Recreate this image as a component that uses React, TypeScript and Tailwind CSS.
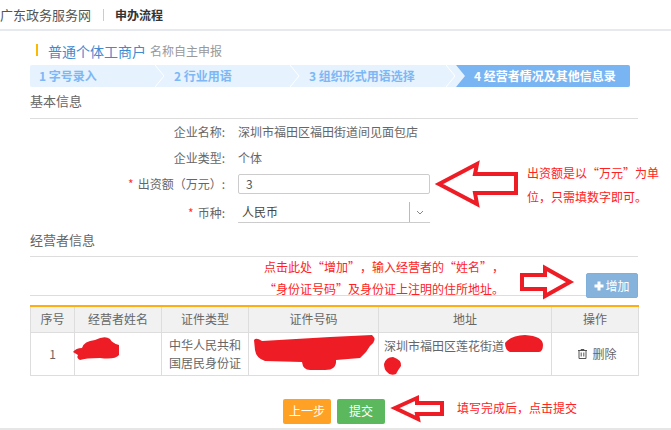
const font = '[font-family:"Noto_Sans_CJK_SC","Liberation_Sans",sans-serif]'

const steps = [
  { label: '1 字号录入', width: 'w-[135px]' },
  { label: '2 行业用语', width: 'w-[135px]' },
  { label: '3 组织形式用语选择', width: 'w-[156px]' },
]

function Chevron() {
  return (
    <svg className="absolute right-0 top-0" width="10" height="22" viewBox="0 0 10 22">
      <path d="M0 0 L9 11 L0 22" fill="none" stroke="#fff" strokeWidth="1" />
    </svg>
  )
}

function Row({ label, required, children, className }: { label: string; required?: boolean; children: React.ReactNode; className?: string }) {
  return (
    <div className={`flex items-center ${className ?? ''}`}>
      <div className="w-[195px] shrink-0 text-right text-[12px] text-[#666]">
        {required && <span className="mr-1 text-[#f33]">*</span>}
        {label}:
      </div>
      <div className="ml-[13px] text-[12px] text-[#666]">{children}</div>
    </div>
  )
}

function Annotations() {
  return (
    <svg className="pointer-events-none absolute left-0 top-0" width="671" height="430" viewBox="0 0 671 430">
      <g fill="#fff" stroke="#ee1c25" strokeWidth="4">
        <path d="M439 184 L477 164 L475 174 L516 174 L516 193 L475 193 L477 204 Z" />
        <path d="M522 275 L545 275 L545 268 L570 282 L545 296 L545 289 L522 289 Z" />
        <path d="M395 408 L417 398 L417 403 L442 403 L442 414 L417 414 L418 419 Z" />
      </g>
      <g fill="#ee1c25">
        <path d="M73 352 Q76 348 82 348 Q84 341 95 340 Q105 335 110 339 Q112 343 119 345 L119 355 Q115 360 100 358 Q85 358 80 360 Q76 358 78 355 Z" />
        <path d="M254 340 Q256 337 262 341 L330 337 L372 335 Q378 340 370 346 L366 352 L360 358 L336 360 Q337 370 325 370 L310 370 Q303 370 302 362 L265 361 Q256 358 255 350 Z" />
        <path d="M505 343 Q510 336 525 335 Q543 336 543 345 Q543 353 537 352 L510 352 Q505 350 505 343 Z" />
        <path d="M384 364 Q386 357 393 357 Q402 360 401 366 Q398 370 396 374 Q390 376 387 372 Q384 369 384 364 Z" />
      </g>
    </svg>
  )
}

export default function App() {
  return (
    <div className={`relative h-[430px] w-[671px] overflow-hidden bg-white [text-spacing-trim:space-all] ${font}`}>
      <header className="flex h-[31px] items-center border-b-2 border-[#e6e9ee]">
        <span className="text-[13px] leading-none text-[#555]">广东政务服务网</span>
        <span className="ml-[12px] h-[12px] w-px bg-[#ccc]" />
        <span className="ml-[11px] text-[12px] font-bold leading-none text-[#333]">申办流程</span>
      </header>

      <main className="ml-[30px] w-[608px]">
        <div className="flex h-[34px] items-center pl-[6px] pt-[3px]">
          <span className="h-[12px] w-[2px] bg-[#fbb900]" />
          <span className="ml-[10px] mt-[2px] text-[14px] leading-none text-[#3f8ad0]">普通个体工商户</span>
          <span className="ml-[4px] mt-[2px] text-[12px] leading-none text-[#999]">名称自主申报</span>
        </div>

        <div className="flex h-[22px] w-[600px] overflow-hidden rounded-[2px] bg-[#e6f2fd]">
          {steps.map((s) => (
            <div key={s.label} className={`relative flex items-center pl-[9px] text-[12px] font-bold text-[#7db8f5] ${s.width}`}>
              {s.label}
              <Chevron />
            </div>
          ))}
          <div className="flex w-[174px] items-center bg-[#7ab5f3] pl-[18px] text-[12px] font-bold text-white [clip-path:polygon(0_0,100%_0,100%_100%,0_100%,9px_50%)]">
            4 经营者情况及其他信息录
          </div>
        </div>

        <div className="flex h-[32px] items-center border-b border-[#ddd] pb-[4px] text-[13px] leading-none text-[#666]">基本信息</div>

        <Row label="企业名称" className="mt-[5px] h-[16px]">深圳市福田区福田街道间见面包店</Row>
        <Row label="企业类型" className="mt-[10px] h-[16px]">个体</Row>
        <Row label="出资额（万元）" required className="mt-[8px] h-[20px]">
          <div className="flex h-[20px] w-[192px] items-center rounded-[2px] border border-[#ccc] pl-[7px] text-[#555]">3</div>
        </Row>
        <Row label="币种" required className="mt-[8px] h-[21px]">
          <div className="flex h-[21px] w-[192px] items-center border-b border-[#ccc] pl-[4px] text-[#444]">
            <span className="flex-1">人民币</span>
            <span className="flex h-[20px] w-[21px] items-center justify-center border-l border-[#bbb]">
              <svg width="8" height="5" viewBox="0 0 8 5">
                <path d="M1 1 L4 4 L7 1" fill="none" stroke="#888" strokeWidth="1" />
              </svg>
            </span>
          </div>
        </Row>

        <div className="flex h-[34px] items-center border-b border-[#ddd] text-[13px] leading-none text-[#666]">经营者信息</div>

        <div className="flex h-[39px] items-start justify-end border-b border-[#ddd] pt-[16px]">
          <button className="relative z-10 flex h-[25px] w-[52px] shrink-0 items-center justify-center gap-[1px] rounded-[2px] border border-[#7fb0dc] bg-[#85b3dc] text-[12px] text-white">
            <svg width="10" height="10" viewBox="0 0 10 10">
              <path d="M5 0.5 V9.5 M0.5 5 H9.5" fill="none" stroke="#fff" strokeWidth="3" />
            </svg>
            增加
          </button>
        </div>

        <table className="mt-[9px] w-[608px] table-fixed border-collapse border-t-2 border-[#fdae12] text-center text-[12px] text-[#666]">
          <colgroup>
            <col className="w-[44px]" />
            <col className="w-[87px]" />
            <col className="w-[87px]" />
            <col className="w-[130px]" />
            <col className="w-[173px]" />
            <col className="w-[87px]" />
          </colgroup>
          <thead>
            <tr className="h-[26px] bg-[#f1f1f1]">
              {['序号', '经营者姓名', '证件类型', '证件号码', '地址', '操作'].map((h) => (
                <th key={h} className="border border-[#ddd] border-t-0 font-normal">{h}</th>
              ))}
            </tr>
          </thead>
          <tbody>
            <tr className="h-[43px]">
              <td className="border border-[#ddd]">1</td>
              <td className="border border-[#ddd]" />
              <td className="border border-[#ddd] leading-[18px]">中华人民共和<br />国居民身份证</td>
              <td className="border border-[#ddd]" />
              <td className="border border-[#ddd] px-[5px] pb-[16px] text-left">深圳市福田区莲花街道</td>
              <td className="border border-[#ddd] pl-[5px]">
                <span className="inline-flex items-center gap-[5px]">
                  <svg width="9" height="10" viewBox="0 0 9 10">
                    <path d="M0 1.5 H9 M3 1.5 V0.5 H6 V1.5 M1 1.5 V9.5 H8 V1.5 M3.2 3.5 V7.5 M5.8 3.5 V7.5" fill="none" stroke="#555" strokeWidth="1" />
                  </svg>
                  删除
                </span>
              </td>
            </tr>
          </tbody>
        </table>

        <div className="mt-[23px] flex gap-[6px] pl-[253px]">
          <button className="h-[25px] w-[48px] rounded-[2px] bg-[#ffa124] text-[12px] text-white">上一步</button>
          <button className="h-[25px] w-[48px] rounded-[2px] bg-[#5cb85c] text-[12px] text-white">提交</button>
        </div>
      </main>

      <div className="absolute bottom-0 left-0 h-[2px] w-full bg-[#e6e6e6]" />

      <Annotations />

      <p className="absolute left-[527px] top-[161px] whitespace-nowrap text-[12px] leading-[24px] text-[#f22]">
        出资额是以“万元”为单
        <br />
        位，只需填数字即可。
      </p>
      <p className="absolute left-[234px] top-[256px] w-[300px] text-center text-[12px] leading-[22px] text-[#f22]">
        点击此处“增加”，输入经营者的“姓名”，
        <br />
        “身份证号码”及身份证上注明的住所地址。
      </p>
      <p className="absolute left-[457px] top-[399px] text-[12px] leading-[18px] text-[#f22]">填写完成后，点击提交</p>
    </div>
  )
}
